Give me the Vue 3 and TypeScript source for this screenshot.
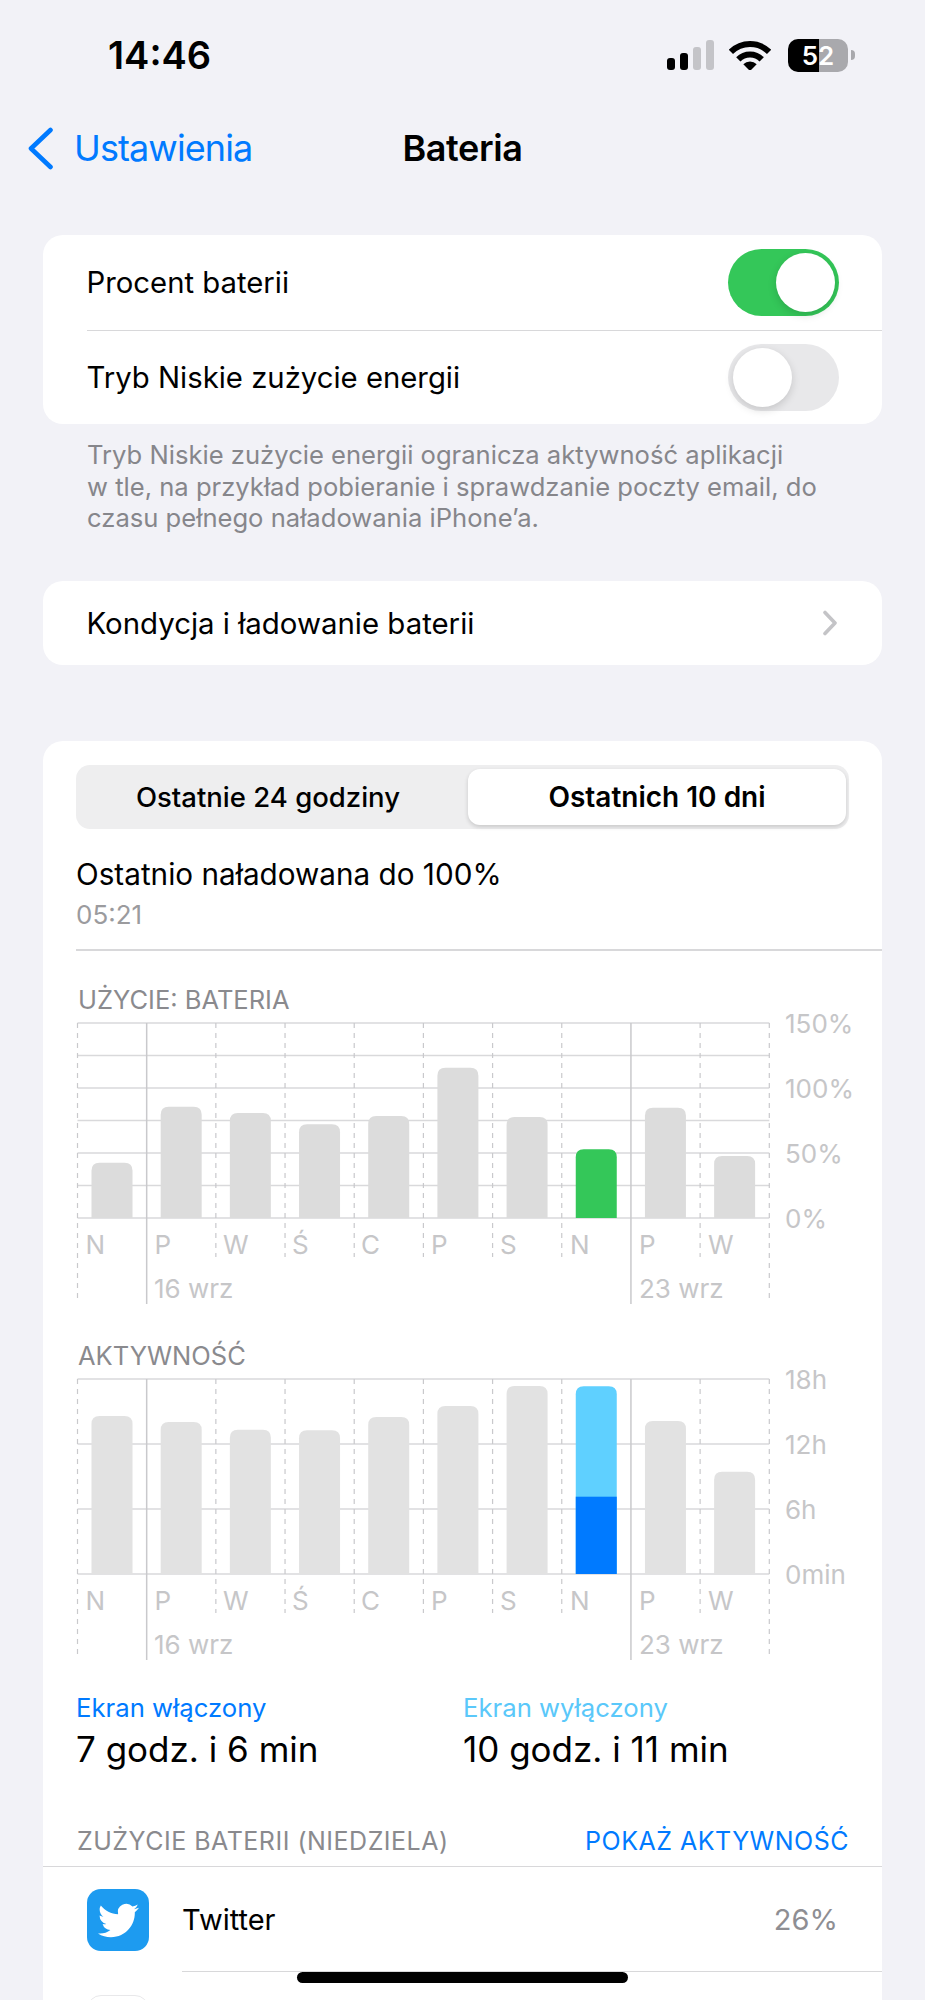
<script setup lang="ts">
interface Bar {
  top: number
  color?: string
  split?: number
  splitColor?: string
}

const days = ['N', 'P', 'W', 'Ś', 'C', 'P', 'S', 'N', 'P', 'W']
const dayLabelX = [8, 77, 145.5, 214.5, 283.5, 353.5, 422.5, 492.5, 561.5, 630.5]

const gridLeft = 34.5
const step = 69.18
const gridTop = 9
const gridBottom = 204
const lastX = gridLeft + step * 10
const columnX = Array.from({ length: 11 }, (_, i) => gridLeft + step * i)

// 1 and 8 mark the first day of a week, drawn with a solid line
const weekStarts = [1, 8]

const usageBars: Bar[] = [
  { top: 148.7 },
  { top: 92.7 },
  { top: 99 },
  { top: 110.3 },
  { top: 102 },
  { top: 53.7 },
  { top: 103 },
  { top: 135.3, color: '#34c759' },
  { top: 93.7 },
  { top: 142 },
]

const activityBars: Bar[] = [
  { top: 46 },
  { top: 52 },
  { top: 59.7 },
  { top: 60.3 },
  { top: 47 },
  { top: 36 },
  { top: 16 },
  { top: 16.3, color: '#5fd0ff', split: 126.7, splitColor: '#007aff' },
  { top: 51 },
  { top: 101.7 },
]

const charts = [
  {
    title: 'UŻYCIE: BATERIA',
    bars: usageBars,
    barColor: '#dcdcdc',
    lines: 6,
    labels: ['150%', '100%', '50%', '0%'],
  },
  {
    title: 'AKTYWNOŚĆ',
    bars: activityBars,
    barColor: '#e2e2e2',
    lines: 3,
    labels: ['18h', '12h', '6h', '0min'],
  },
]

const barPath = (x: number, top: number, radius: number) => {
  const w = 41
  return `M${x} ${gridBottom}V${top + radius}Q${x} ${top} ${x + radius} ${top}H${x + w - radius}Q${x + w} ${top} ${x + w} ${top + radius}V${gridBottom}Z`
}

const hLine = (chartLines: number, i: number) =>
  gridTop + ((gridBottom - gridTop) / chartLines) * i
</script>

<template>
  <div class="page">
    <header class="status">
      <span class="time">14:46</span>
      <div class="status-icons">
        <div class="signal">
          <i class="on h1"></i>
          <i class="on h2"></i>
          <i class="h3"></i>
          <i class="h4"></i>
        </div>
        <svg class="wifi" width="42" height="30" viewBox="0 0 42 30">
          <path d="M21 31L14.3 24.3A9.5 9.5 0 0 1 27.7 24.3Z" fill="#000" />
          <path d="M9.3 19.3A16.5 16.5 0 0 1 32.7 19.3" fill="none" stroke="#000" stroke-width="6" />
          <path d="M1.9 11.9A27 27 0 0 1 40.1 11.9" fill="none" stroke="#000" stroke-width="6" />
        </svg>
        <div class="battery"><span>52</span></div>
        <i class="battery-nub"></i>
      </div>
    </header>

    <nav class="nav">
      <div class="back">
        <svg width="27" height="43" viewBox="0 0 27 43">
          <path d="M23.5 3L4 21.5L23.5 40" fill="none" stroke="#007aff" stroke-width="4.6" stroke-linecap="round" stroke-linejoin="round" />
        </svg>
        <span>Ustawienia</span>
      </div>
      <h1>Bateria</h1>
    </nav>

    <section class="card toggles">
      <div class="row">
        <span>Procent baterii</span>
        <div class="switch on"><i></i></div>
      </div>
      <div class="row">
        <span>Tryb Niskie zużycie energii</span>
        <div class="switch"><i></i></div>
      </div>
    </section>
    <p class="footnote">
      Tryb Niskie zużycie energii ogranicza aktywność aplikacji<br />
      w tle, na przykład pobieranie i sprawdzanie poczty email, do<br />
      czasu pełnego naładowania iPhone’a.
    </p>

    <section class="card health">
      <span>Kondycja i ładowanie baterii</span>
      <svg width="16" height="26" viewBox="0 0 16 26">
        <path d="M3 2.5L13 13L3 23.5" fill="none" stroke="#c4c4c7" stroke-width="3.6" stroke-linecap="round" stroke-linejoin="round" />
      </svg>
    </section>

    <section class="card usage">
      <div class="segments">
        <div class="segment first">Ostatnie 24 godziny</div>
        <div class="segment active">Ostatnich 10 dni</div>
      </div>
      <div class="charged">Ostatnio naładowana do 100%</div>
      <div class="charged-time">05:21</div>
      <div class="divider"></div>

      <div v-for="chart in charts" :key="chart.title" class="chart">
        <div class="chart-title">{{ chart.title }}</div>
        <!-- the viewBox starts above zero so the top axis label has room -->
        <svg class="plot" width="839" height="304" viewBox="0 -8 839 304">
          <line
            v-for="i in chart.lines + 1"
            :key="'h' + i"
            :x1="gridLeft"
            :x2="lastX"
            :y1="hLine(chart.lines, i - 1)"
            :y2="hLine(chart.lines, i - 1)"
            stroke="#d9d9db"
            stroke-width="1.5"
          />
          <template v-for="(x, i) in columnX" :key="'v' + i">
            <line
              v-if="weekStarts.includes(i)"
              :x1="x"
              :x2="x"
              :y1="gridTop"
              :y2="gridTop + 281"
              stroke="#c9c9cc"
              stroke-width="1.5"
            />
            <line
              v-else
              :x1="x"
              :x2="x"
              :y1="gridTop"
              :y2="i === 0 || i === 10 ? gridTop + 277 : gridTop + 234"
              stroke="#c9c9cc"
              stroke-width="1.2"
              stroke-dasharray="5 5"
            />
          </template>
          <template v-for="(bar, i) in chart.bars" :key="'b' + i">
            <path :d="barPath(columnX[i] + 14, bar.top, 8)" :fill="bar.color ?? chart.barColor" />
            <rect
              v-if="bar.split"
              :x="columnX[i] + 14"
              :y="bar.split"
              width="41"
              :height="gridBottom - bar.split"
              :fill="bar.splitColor"
            />
          </template>
          <text v-for="(d, i) in days" :key="'d' + i" class="axis" :x="dayLabelX[i] + 34.5" :y="240">{{ d }}</text>
          <text class="axis" x="111" y="284">16 wrz</text>
          <text class="axis" x="596" y="284">23 wrz</text>
          <text
            v-for="(label, i) in chart.labels"
            :key="label"
            class="axis"
            x="742"
            :y="gridTop + 65 * i + 10"
          >{{ label }}</text>
        </svg>
      </div>

      <div class="stats">
        <div>
          <div class="stat-label">Ekran włączony</div>
          <div class="stat-value">7 godz. i 6 min</div>
        </div>
        <div>
          <div class="stat-label light">Ekran wyłączony</div>
          <div class="stat-value">10 godz. i 11 min</div>
        </div>
      </div>

      <div class="apps-head">
        <span>ZUŻYCIE BATERII (NIEDZIELA)</span>
        <a>POKAŻ AKTYWNOŚĆ</a>
      </div>

      <div class="app">
        <div class="app-icon twitter">
          <svg width="41" height="41" viewBox="0 0 24 24">
            <path
              fill="#fff"
              d="M23.953 4.57a10 10 0 01-2.825.775 4.958 4.958 0 002.163-2.723c-.951.555-2.005.959-3.127 1.184a4.92 4.92 0 00-8.384 4.482C7.69 8.095 4.067 6.13 1.64 3.162a4.822 4.822 0 00-.666 2.475c0 1.71.87 3.213 2.188 4.096a4.904 4.904 0 01-2.228-.616v.06a4.923 4.923 0 003.946 4.827 4.996 4.996 0 01-2.212.085 4.936 4.936 0 004.604 3.417 9.867 9.867 0 01-6.102 2.105c-.39 0-.779-.023-1.17-.067a13.995 13.995 0 007.557 2.209c9.053 0 13.998-7.496 13.998-13.985 0-.21 0-.42-.015-.63A9.935 9.935 0 0024 4.59z"
            />
          </svg>
        </div>
        <div class="app-body">
          <span>Twitter</span>
          <span class="percent">26%</span>
        </div>
      </div>
      <div class="app">
        <div class="app-icon other"><i></i></div>
      </div>
    </section>

    <div class="home-indicator"></div>
  </div>
</template>

<style>
body {
  background: #f2f2f7;
}
</style>

<style scoped>
.page {
  position: relative;
  width: 925px;
  height: 2000px;
  overflow: hidden;
  background: #f2f2f7;
  color: #000;
  font-family: Inter, "Noto Sans", sans-serif;
}

.status {
  height: 110px;
  display: flex;
  align-items: center;
  justify-content: space-between;
  padding: 0 70px 0 108px;
}
.time {
  font-size: 38px;
  font-weight: 600;
}
.status-icons {
  display: flex;
  align-items: center;
}
.signal {
  display: flex;
  align-items: flex-end;
  gap: 5px;
  height: 30px;
  margin-right: 15px;
}
.signal i {
  width: 8px;
  border-radius: 3px;
  background: #c4c4c8;
}
.signal i.on {
  background: #000;
}
.h1 { height: 12px; }
.h2 { height: 17px; }
.h3 { height: 23px; }
.h4 { height: 30px; }
.wifi {
  margin-right: 17px;
}
.battery {
  width: 60px;
  height: 33px;
  border-radius: 10px;
  background: linear-gradient(90deg, #000 0 31px, #a9a9ad 31px);
  color: #fff;
  font-size: 26px;
  font-weight: 600;
  line-height: 33px;
  text-align: center;
}
.battery-nub {
  width: 4px;
  height: 10px;
  margin-left: 3px;
  border-radius: 0 5px 5px 0;
  background: #a9a9ad;
}

.nav {
  height: 76px;
  display: grid;
  grid-template-columns: 1fr auto 1fr;
  align-items: center;
}
.back {
  display: flex;
  align-items: center;
  gap: 20px;
  padding-left: 27px;
  color: #007aff;
  font-size: 36px;
  letter-spacing: -0.9px;
}
.nav h1 {
  margin: 0;
  font-size: 36px;
  font-weight: 600;
  letter-spacing: -0.4px;
}

.card {
  margin: 0 43px;
  background: #fff;
  border-radius: 20px;
}
.toggles {
  margin-top: 49px;
}
.row {
  height: 94.5px;
  margin-left: 43.5px;
  padding-right: 43px;
  display: flex;
  align-items: center;
  justify-content: space-between;
  font-size: 29.3px;
  box-sizing: border-box;
}
.row + .row {
  border-top: 1.5px solid #d8d8da;
}
.switch {
  position: relative;
  width: 111px;
  height: 67px;
  border-radius: 34px;
  background: #e8e8ea;
}
.switch.on {
  background: #34c759;
}
.switch i {
  position: absolute;
  top: 4px;
  left: 5px;
  width: 59px;
  height: 59px;
  border-radius: 50%;
  background: #fff;
  box-shadow: 0 3px 8px rgba(0, 0, 0, 0.15);
}
.switch.on i {
  left: 48px;
}

.footnote {
  margin: 15px 43px 0 87px;
  color: #86868b;
  font-size: 25.6px;
  line-height: 31.5px;
}

.health {
  margin-top: 47.5px;
  height: 84px;
  padding: 0 44px 0 43.5px;
  display: flex;
  align-items: center;
  justify-content: space-between;
  font-size: 29.4px;
}

.usage {
  margin-top: 76px;
  padding-top: 24px;
  height: 1300px;
}
.segments {
  margin: 0 33px;
  height: 64px;
  padding: 4px;
  box-sizing: border-box;
  display: grid;
  grid-template-columns: 388px 378px;
  border-radius: 14px;
  background: #eeeeef;
}
.segment {
  display: flex;
  align-items: center;
  justify-content: center;
  font-size: 27.5px;
  font-weight: 500;
  border-radius: 12px;
}
.segment.first {
  padding-right: 12px;
}
.segment.active {
  background: #fff;
  font-size: 28px;
  font-weight: 600;
  box-shadow: 0 2px 4px rgba(0, 0, 0, 0.16);
}
.charged {
  margin: 25px 33px 0;
  font-size: 29.7px;
  line-height: 40px;
}
.charged-time {
  margin: 6px 33px 0;
  color: #9b9b9e;
  font-size: 26px;
  line-height: 30px;
}
.divider {
  margin: 19px 0 0 33px;
  height: 1.5px;
  background: #d8d8da;
}

.chart-title {
  margin: 35px 34px -8px 35px;
  color: #8a8a8e;
  font-size: 25.5px;
  line-height: 28px;
}
.chart + .chart .chart-title {
  margin-top: 32px;
}
.plot {
  display: block;
}
.axis {
  fill: #c6c6c8;
  font-family: Inter, "Noto Sans", sans-serif;
  font-size: 26px;
}

.stats {
  margin: 26px 33px 0;
  display: grid;
  grid-template-columns: 387px 1fr;
}
.stat-label {
  color: #007aff;
  font-size: 25.7px;
  line-height: 32px;
}
.stat-label.light {
  color: #5ac8fa;
}
.stat-value {
  margin-top: 3px;
  font-size: 35px;
  line-height: 44px;
}

.apps-head {
  margin: 55.5px 33px 0 34px;
  height: 40px;
  box-sizing: border-box;
  padding-bottom: 10px;
  display: flex;
  justify-content: space-between;
  align-items: center;
  color: #8a8a8e;
  font-size: 25px;
  letter-spacing: 0.5px;
}
.apps-head a {
  color: #007aff;
}

.app {
  display: flex;
  gap: 33px;
  padding-left: 44px;
  border-top: 1.5px solid #d8d8da;
}
.app + .app {
  border-top: none;
}
.app-icon {
  flex: none;
  width: 62px;
  height: 62px;
  margin: 22px 0;
  border-radius: 14px;
  box-sizing: border-box;
  display: flex;
  align-items: center;
  justify-content: center;
}
.twitter {
  background: #1d9bf0;
}
.other {
  align-items: flex-start;
  border: 1px solid #e8e8ea;
  background: #fff;
}
.other i {
  width: 42px;
  height: 42px;
  margin-top: 4px;
  border-radius: 50%;
  background: #2ac4f8;
}
.app-body {
  flex: 1;
  height: 105px;
  padding-right: 44px;
  display: flex;
  align-items: center;
  justify-content: space-between;
  border-bottom: 1.5px solid #d8d8da;
  box-sizing: border-box;
  font-size: 29px;
}
.percent {
  color: #8e8e93;
}

.home-indicator {
  position: absolute;
  left: 297px;
  top: 1972px;
  width: 331px;
  height: 11px;
  border-radius: 6px;
  background: #000;
}
</style>
